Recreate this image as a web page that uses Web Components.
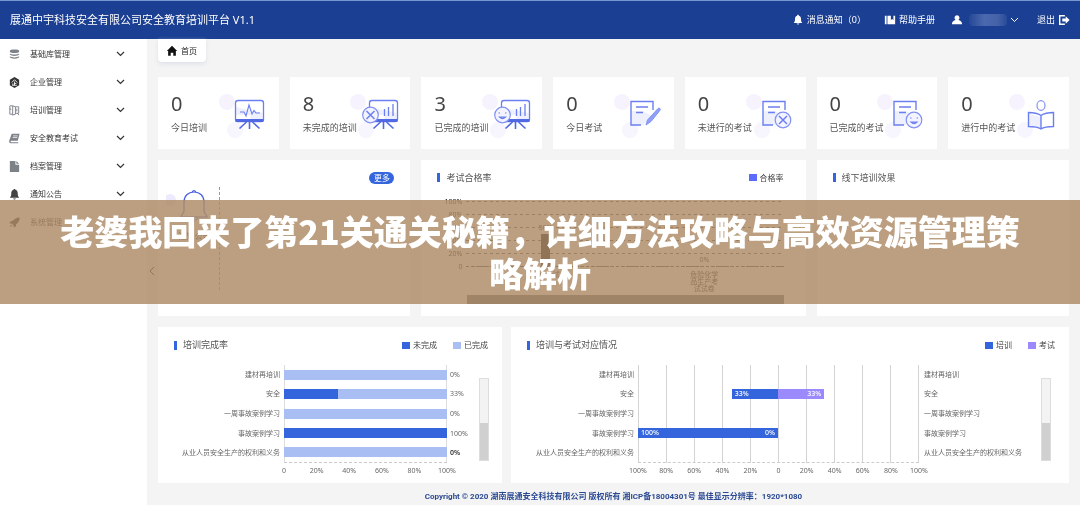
<!DOCTYPE html>
<html lang="zh-CN">
<head>
<meta charset="utf-8">
<title>安全教育培训平台</title>
<style>
body{margin:0;background:#f4f4f4;color:#555;font-family:"Noto Sans","Noto Sans CJK SC",sans-serif;font-size:8px;line-height:12px}
</style>
</head>
<body>
<training-app></training-app>
<script>
const RESET = '*{box-sizing:border-box}button{font:inherit;color:inherit;border:0;background:none;padding:0;margin:0}a{color:inherit;text-decoration:none}svg{display:block;flex:none}';
class Base extends HTMLElement {
  constructor() { super(); this.attachShadow({ mode: 'open' }); }
  connectedCallback() { this.shadowRoot.innerHTML = `<style>${RESET}${this.css()}</style>${this.html()}`; }
  css() { return ''; }
  html() { return ''; }
}

const ICONS = {
  db: '<path d="M2 3c0-2 10-2 10 0v1c0 2-10 2-10 0zM2 6c2 1.500 8 1.500 10 0v1c-1 2-9 2-10 0zM2 9c2 1.500 8 1.500 10 0v1c-1 2-9 2-10 0z" fill="#7d8288"/>',
  company: '<path d="M7 1l5 3v6l-5 3-5-3V4z" fill="#333"/><path d="M4 7l3-3 3 3M7 6v4M7 8h2M5.200 8v2M4.500 10h5" stroke="#fff" fill="none" stroke-width=".9"/>',
  train: '<path d="M2 2h3M2 2v9h3M5 2l3 1v8l-3 1zM8 3h3.500v7H8M9.500 5v3M1.500 5.500h2M10 10l2 2" stroke="#7d8288" fill="none"/>',
  book: '<path d="M4 2h8.500l-2 7.500H3.500c-1 0-1 1.500 0 1.500H11v1H3c-2 0-2-2-1.500-3z" fill="#7d8288"/><path d="M5.500 4.200h5M5 6h5" stroke="#fff" stroke-width=".8"/>',
  file: '<path d="M2 1h6v4h4v8H2zM9 1l3 3H9z" fill="#7d8288"/>',
  bell: '<path d="M7 1c.8 0 1 .5 1 1 2 .7 2.500 2 2.500 4 0 2.500.5 3 1.500 4.500H2C3 9 3.500 8.500 3.500 6c0-2 .5-3.300 2.500-4 0-.5.2-1 1-1zM5.500 11.200h3c-.3 1.500-2.700 1.500-3 0z" fill="currentColor"/>',
  rocket: '<path d="M12.500 1.500c-4 0-6 2-7.500 4H3L1.500 8l2.500.2L6 10l.2 2.500L8.700 11V9c2-1.500 4-3.500 3.800-7.500zM3.500 9.500L1.500 12.500l3-2z" fill="#333"/>',
  home: '<path d="M7 1l6 6h-1.500v5.500h-3V9h-3v3.500h-3V7H1z" fill="#111"/>',
  manual: '<path d="M1 2h2v10H1zM4 2h4v5l1.500-1.300L11 7V2h2v10H4z" fill="#fff"/>',
  user: '<path d="M7 1.500a3 3 0 0 1 1.700 5.400c2.500.6 4.300 2 4.300 5.100H1c0-3.100 1.800-4.500 4.300-5.100A3 3 0 0 1 7 1.500z" fill="#fff"/>',
  exit: '<path d="M8 2H2v10h6" fill="none" stroke="#fff" stroke-width="1.600"/><path d="M5 5.200h4V2.500L13.500 7 9 11.500V8.800H5z" fill="#fff"/>'
};
class AppIcon extends Base {
  css() { return ':host{display:block;flex:none;width:var(--icon,12px);height:var(--icon,12px)}svg{width:100%;height:100%}'; }
  html() { return `<svg viewBox="0 0 14 14" aria-hidden="true">${ICONS[this.getAttribute('name')]}</svg>`; }
}
customElements.define('app-icon', AppIcon);

class AppHeader extends Base {
  css() { return `:host{display:flex;align-items:center;height:39px;padding:0 10px;background:#1b3f92;border-top:1px solid #7896cf;color:#fff;--icon:12px}
  h1{margin:0 auto 0 0;font-size:11px;line-height:16px;font-weight:400;white-space:nowrap}
  nav{display:flex;align-items:center;font-size:9px;line-height:12px;white-space:nowrap}
  nav a,nav button{display:flex;align-items:center;gap:3px}
  .help{margin-left:18px}.user{margin-left:16px}.exit{margin-left:18px}
  .name{width:38px;height:12px;margin:0 0 0 3px;border-radius:4px;background:linear-gradient(90deg,#254896,#4b69ae 40%,#4562a8 75%,#294b99)}`; }
  html() { return `<h1>展通中宇科技安全有限公司安全教育培训平台 V1.1</h1>
  <nav><a href="#msg"><app-icon name="bell"></app-icon>消息通知（0）</a>
  <a class="help" href="#help"><app-icon name="manual"></app-icon>帮助手册</a>
  <button class="user" aria-label="用户菜单"><app-icon name="user"></app-icon><span class="name"></span>
  <svg width="9" height="6" viewBox="0 0 9 6"><path d="M1 1l3.500 3.500L8 1" fill="none" stroke="#fff"/></svg></button>
  <a class="exit" href="#exit">退出<app-icon name="exit"></app-icon></a></nav>`; }
}
customElements.define('app-header', AppHeader);

class SideItem extends Base {
  css() { return `:host{display:block}button{display:flex;align-items:center;width:100%;height:28px;padding:0 22px 0 8px;gap:9px;color:#444;text-align:left}
  span{flex:1;color:#333}`; }
  html() { return `<button><app-icon name="${this.getAttribute('icon')}"></app-icon><span><slot></slot></span>
  <svg width="9" height="6" viewBox="0 0 9 6"><path d="M1 1l3.500 3.500L8 1" fill="none" stroke="#333" stroke-width="1.200"/></svg></button>`; }
}
customElements.define('side-item', SideItem);

class SideMenu extends Base {
  css() { return `:host{display:block;position:relative;padding-top:1px;background:#fff;--icon:13px}
  .fold{position:absolute;left:100%;top:227px;margin-left:2px}`; }
  html() {
    const items = [['db', '基础库管理'], ['company', '企业管理'], ['train', '培训管理'], ['book', '安全教育考试'], ['file', '档案管理'], ['bell', '通知公告'], ['rocket', '系统管理']];
    return `<nav>${items.map(([i, t]) => `<side-item icon="${i}">${t}</side-item>`).join('')}</nav>
    <button class="fold" aria-label="收起菜单"><svg width="6" height="10" viewBox="0 0 6 10"><path d="M5 1L1 5l4 4" fill="none" stroke="#111"/></svg></button>`;
  }
}
customElements.define('side-menu', SideMenu);

const BLOBS = '<circle cx="9" cy="9" r="8" fill="#f7f3fe"/><circle cx="17" cy="37" r="8" fill="#f7f5fe"/>';
const LEGS = x => `<path d="M${x} 29v7M${x - 3} 29l-7 6.500M${x + 3} 29l7 6.500" stroke="#5068e4" stroke-width="1.600"/>`;
const BOARD = x => `<path d="M${x} 14v8h15v5h12V20z" fill="#eef0fe"/><rect x="${x}" y="7.500" width="28" height="21" rx="2.500" fill="none" stroke="#6b7ff0" stroke-width="1.300"/><path d="M${x} 27.500h28" stroke="#5068e4" stroke-width="3"/>${LEGS(x + 14)}`;
const BARS = '<path d="M35.500 16v7M39.500 14v9M44 11v12" stroke="#6b7ff0" stroke-width="1.300"/>';
const DOC = '<path d="M18 18h12l9 5-9 9H18z" fill="#eef0fe"/><path d="M40 17V8.500H18v23.500h10M23 14h12M23 19.500h7" fill="none" stroke="#6b7ff0" stroke-width="1.400"/>';
const CROSS = (x, y) => `<circle cx="${x}" cy="${y}" r="7.800" fill="#f3f4ff" stroke="#8292f2" stroke-width="1.200"/><path d="M${x - 4} ${y - 4}l8 8M${x + 4} ${y - 4}l-8 8" stroke="#6b7ff0" stroke-width="1.500"/>`;
const SMILE = (x, y) => `<circle cx="${x}" cy="${y}" r="7.800" fill="#f3f4ff" stroke="#8292f2" stroke-width="1.200"/><path d="M${x - 4} ${y - 2}h1.500M${x + 2.5} ${y - 2}h1.500M${x - 3} ${y + 2}q3 3 6 0z" fill="none" stroke="#6b7ff0" stroke-width="1.200"/>`;
const ART = {
  pulse: BOARD(17.5) + '<path d="M22 19h4l2 4 3-11 3 9 2-3.500 2 2.500h4" fill="none" stroke="#6b7ff0" stroke-width="1.100"/>',
  boardx: BOARD(20.5) + BARS + CROSS(21.5, 22),
  boardok: BOARD(20.5) + BARS + SMILE(21.5, 22),
  write: DOC + '<path d="M33 32l1.500-5L45 15.500c1-1 3 0 2 1.800L38 28.500z" fill="#8fa0f8" stroke="#8292f2"/>',
  docx: DOC + CROSS(38, 27),
  docok: DOC + SMILE(38, 27),
  read: '<path d="M21 21l12 3v11l-12-3z" fill="#eef0fe"/><ellipse cx="33" cy="12.500" rx="4" ry="4.800" fill="none" stroke="#8292f2" stroke-width="1.200"/><path d="M33 22.500c-3-2-8-3-12.500-3v14c4.500 0 9.500.5 12.500 2.500 3-2 8-2.500 12.500-2.500v-14c-4.500 0-9.500 1-12.500 3zv13" fill="none" stroke="#6b7ff0" stroke-width="1.400"/>'
};
class StatCard extends Base {
  css() { return `:host{display:flex;height:72px;padding:16px 9px 0 13px;background:#fff;white-space:nowrap}
  div{flex:1;width:0}strong{display:block;font-size:20px;line-height:22px;font-weight:400;color:#444}
  span{display:block;margin-top:7px;font-size:9px;line-height:12px}svg{mix-blend-mode:multiply}`; }
  html() { return `<div><strong>${this.getAttribute('value')}</strong><span><slot></slot></span></div>
  <svg width="52" height="46" viewBox="0 0 52 46" aria-hidden="true">${BLOBS}${ART[this.getAttribute('art')]}</svg>`; }
}
customElements.define('stat-card', StatCard);

class PanelCard extends Base {
  css() { return `:host{display:flex;flex-direction:column;min-width:0;height:156px;background:#fff}
  header{display:flex;align-items:center;height:var(--head,35px);flex:none;padding:0 14px 0 16px}
  h2{margin:0 auto 0 0;font-size:9px;line-height:12px;font-weight:400;color:#555;display:flex;align-items:center;gap:6px}
  h2::before{content:"";width:3px;height:9px;background:#3465dc}`; }
  html() { const t = this.getAttribute('heading'); return `<header>${t ? `<h2>${t}</h2>` : ''}<slot name="extra"></slot></header><slot></slot>`; }
}
customElements.define('panel-card', PanelCard);

class LegendKey extends Base {
  css() { return ':host{display:flex;align-items:center;gap:3px;margin-left:16px;color:#444;white-space:nowrap}i{width:8px;height:7px;background:var(--key)}'; }
  html() { return '<i></i><slot></slot>'; }
}
customElements.define('legend-key', LegendKey);

const AXIS = '.axis{display:flex;justify-content:space-between}.axis span{width:0;display:flex;justify-content:center;white-space:nowrap}';
const NAMES = ['建材再培训', '安全', '一周事故案例学习', '事故案例学习', '从业人员安全生产的权利和义务'];
const SCROLL = '.scroll{width:10px;height:83px;margin-top:13px;border:1px solid #ddd;background:#f3f3f3;display:flex;align-items:flex-end}.scroll i{width:100%;height:37px;background:#d0d0d0}';
const ROWS = '.col{display:flex;flex-direction:column;height:98px;white-space:nowrap}.col>*{flex:1;display:flex;align-items:center}.names>*{justify-content:flex-end;padding-right:4px}';
const axis = a => `<div class="axis">${a.map(t => `<span>${t}</span>`).join('')}</div>`;

class RateChart extends Base {
  css() { return `:host{display:grid;grid-template-columns:126px 1fr 32px 10px;padding:2px 13px 0 0;font-size:7px;line-height:12px;color:#666}${AXIS}${SCROLL}${ROWS}
  .plot{background:linear-gradient(#ddd,#ddd) 0 0/1px 100% no-repeat,linear-gradient(#ddd,#ddd) 100% 0/1px 100% no-repeat;border-bottom:1px dashed #ccc}
  .plot i{height:10px;background:#3465dc}.plot i+i{flex:1;background:#a9bef3}
  .vals>*{padding-left:3px}.vals>:last-child{font-weight:600;color:#333}.axis{grid-column:2;margin-top:2px}`; }
  html() { return `<div class="col names">${NAMES.map(n => `<span>${n}</span>`).join('')}</div>
  <div class="col plot">${[0, 33, 0, 100, 0].map(v => `<div><i style="width:${v}%"></i><i></i></div>`).join('')}</div>
  <div class="col vals">${[0, 33, 0, 100, 0].map(v => `<span>${v}%</span>`).join('')}</div>
  <div class="scroll"><i></i></div>${axis(['0', '20%', '40%', '60%', '80%', '100%'])}`; }
}
customElements.define('rate-chart', RateChart);

class MatchChart extends Base {
  css() { return `:host{display:grid;grid-template-columns:127px 1fr 122px 10px;padding:2px 18px 0 0;font-size:7px;line-height:12px;color:#666}${AXIS}${SCROLL}${ROWS}
  .plot{background:linear-gradient(90deg,#d4d4d4 1px,transparent 1px) 0 0/10% 100%;border-right:1px solid #d4d4d4;border-bottom:1px dashed #ccc;color:#fff}
  .half{flex:1;display:flex}.left{justify-content:flex-end}
  .half b{display:flex;justify-content:space-between;height:10px;line-height:10px;padding:0 3px;font-weight:500;background:#3465dc}
  .right b{background:#9b8afb;justify-content:flex-end}
  .other>*{padding-left:5px}.axis{grid-column:2;margin-top:2px}`; }
  html() {
    const bar = (v, side, extra = '') => `<div class="half ${side}">${v ? `<b style="width:${v}%"><span>${v}%</span>${extra}</b>` : ''}</div>`;
    return `<div class="col names">${NAMES.map(n => `<span>${n}</span>`).join('')}</div>
    <div class="col plot"><div></div><div>${bar(33, 'left')}${bar(33, 'right')}</div><div></div><div>${bar(100, 'left', '<span>0%</span>')}${bar(0, 'right')}</div><div></div></div>
    <div class="col other">${NAMES.map(n => `<span>${n}</span>`).join('')}</div>
    <div class="scroll"><i></i></div>${axis(['100%', '80%', '60%', '40%', '20%', '0', '20%', '40%', '60%', '80%', '100%'])}`;
  }
}
customElements.define('match-chart', MatchChart);

class PassChart extends Base {
  css() { return `:host{display:grid;grid-template-columns:45px 1fr;padding-right:22px;font-size:7px;line-height:13px;color:#111}
  .scale{display:flex;flex-direction:column;text-align:right;padding-right:4px;height:72px}
  .plot{margin-top:6px;height:66px;display:flex;border-bottom:1px dashed #444;background:
    repeating-linear-gradient(90deg,transparent 0 3px,#fff 3px 6px),repeating-linear-gradient(#555 0 1px,transparent 1px 13px)}
  .plot div{flex:1;display:flex;flex-direction:column;align-items:center;justify-content:flex-end}
  .plot i{width:9px;background:#111}
  .cats{grid-column:2;display:flex;line-height:7px;height:28px;padding-top:4px;text-align:center}.cats span{flex:1;display:flex;justify-content:center}.cats b{width:28px;font-weight:400}
  .zoom{grid-column:2;height:9px;margin-left:1px;background:#6c6c78}`; }
  html() { return `<div class="scale">${['100%', '80%', '60%', '40%', '20%', '0'].map(t => `<span>${t}</span>`).join('')}</div>
  <div class="plot"><div>50%<i style="height:32px"></i></div><div>0%</div></div>
  <div class="cats"><span><b>安全考试</b></span><span><b>危险化学品生产考试试卷</b></span></div><div class="zoom"></div>`; }
}
customElements.define('pass-chart', PassChart);

class NoticeBox extends Base {
  css() { return `:host{display:flex;padding:0 0 0 8px;margin-top:-8px}
  div{width:54px;height:103px;padding-top:1px;border-right:1px dashed #999;text-align:center}span{display:block;margin-top:6px;padding-left:4px;color:#111}`; }
  html() { return `<div><svg width="44" height="36" viewBox="0 0 44 36" aria-hidden="true"><circle cx="4" cy="12" r="6" fill="#ecebfd"/><path d="M28 4c6 0 10 4 10 10v9c0 2 3 4 3 6H15c0-2 3-4 3-6v-9C18 8 22 4 28 4zm-2 0q2-3 4 0M24 30q4 5 8 0" fill="none" stroke="#4a60e0" stroke-width="1.200"/></svg><span>通知公告</span></div>`; }
}
customElements.define('notice-box', NoticeBox);

class TitleBanner extends Base {
  css() { return `:host{display:block;padding:10px 5%;background:rgba(172,138,100,.82);color:#fff;text-align:center}
  p{margin:0;font:900 34px/42px "Noto Sans CJK SC",sans-serif}`; }
  html() { return '<p><slot></slot></p>'; }
}
customElements.define('title-banner', TitleBanner);

class TrainingApp extends Base {
  css() { return `:host{display:block;position:relative}
  .body{display:grid;grid-template-columns:147px 1fr;min-height:calc(100vh - 39px)}
  main{min-width:0;padding:0 11px}
  .tab{display:inline-flex;align-items:center;gap:3px;height:23px;padding:0 9px 0 8px;background:#fff;color:#222;border-radius:0 0 4px 4px;box-shadow:0 2px 4px #dde1ea;--icon:12px}
  .grid{display:grid;grid-template-columns:repeat(7,1fr);gap:11px;margin-top:15px}
  .two{grid-column:span 2}.three{grid-column:span 3}
  .low{display:grid;grid-template-columns:344fr 558fr;gap:9px;margin-top:11px;--head:36px}
  .more{width:25px;height:12px;border-radius:6px;background:#3465dc;color:#fff;line-height:12px;text-align:center;margin:0 2px 0 auto}
  .top{display:flex}
  footer{margin-top:8px;text-align:center;font-family:Roboto,"Noto Sans CJK SC",sans-serif;font-weight:700;line-height:12px;color:#2b4a93}
  title-banner{position:absolute;left:0;right:0;top:200px}`; }
  html() {
    const stats = [[0, '今日培训', 'pulse'], [8, '未完成的培训', 'boardx'], [3, '已完成的培训', 'boardok'], [0, '今日考试', 'write'], [0, '未进行的考试', 'docx'], [0, '已完成的考试', 'docok'], [0, '进行中的考试', 'read']];
    return `<app-header></app-header>
    <div class="body"><side-menu></side-menu><main>
      <div class="top"><a class="tab" href="#home"><app-icon name="home"></app-icon>首页</a></div>
      <div class="grid">${stats.map(([v, t, a]) => `<stat-card value="${v}" art="${a}">${t}</stat-card>`).join('')}
        <panel-card class="two"><button class="more" slot="extra">更多</button><notice-box></notice-box></panel-card>
        <panel-card class="three" heading="考试合格率"><legend-key slot="extra" style="--key:#5b6bfa;margin-right:8px">合格率</legend-key><pass-chart></pass-chart></panel-card>
        <panel-card class="two" heading="线下培训效果"></panel-card>
      </div>
      <div class="low">
        <panel-card heading="培训完成率"><legend-key slot="extra" style="--key:#3465dc">未完成</legend-key><legend-key slot="extra" style="--key:#a9bef3">已完成</legend-key><rate-chart></rate-chart></panel-card>
        <panel-card heading="培训与考试对应情况"><legend-key slot="extra" style="--key:#3465dc">培训</legend-key><legend-key slot="extra" style="--key:#9b8afb">考试</legend-key><match-chart></match-chart></panel-card>
      </div>
      <footer>Copyright © 2020 湖南展通安全科技有限公司 版权所有 湘ICP备18004301号 最佳显示分辨率：1920*1080</footer>
    </main></div>
    <title-banner>老婆我回来了第21关通关秘籍，详细方法攻略与高效资源管理策略解析</title-banner>`;
  }
}
customElements.define('training-app', TrainingApp);
</script>
</body>
</html>
